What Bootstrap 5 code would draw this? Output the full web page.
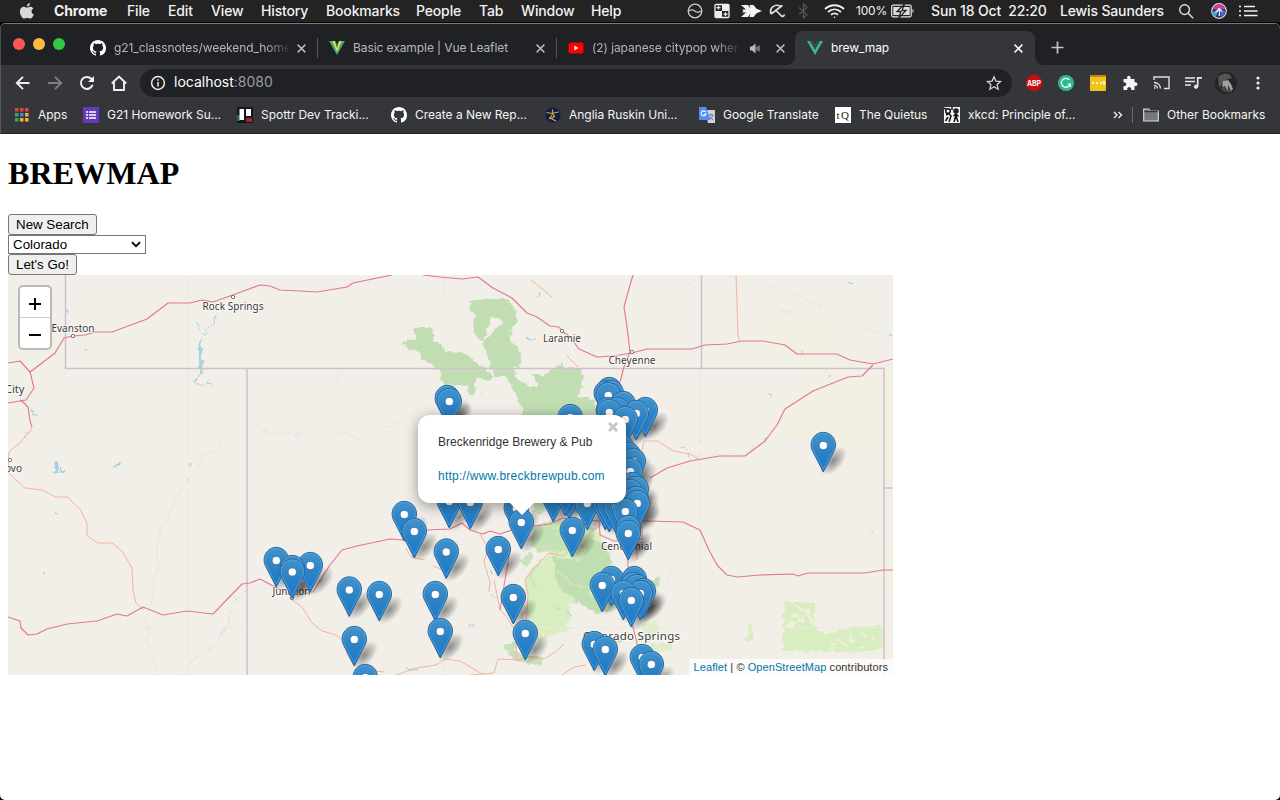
<!DOCTYPE html>
<html lang="en">
<head>
<meta charset="utf-8">
<title>brew_map</title>
<meta name="viewport" content="width=device-width, initial-scale=1">
<link href="https://cdn.jsdelivr.net/npm/bootstrap@5.3.0/dist/css/bootstrap.min.css" rel="stylesheet">
<style>
  html, body { height: 100%; }
  body { background: #06070a; overflow: hidden; font-family: Inter, "Liberation Sans", sans-serif; }
  svg { display: block; flex: none; overflow: visible; }
  .os-bar { height: 23px; background: #232324; color: #f2f2f2; font-size: 14px; font-weight: 500; letter-spacing: -.15px;
    display: grid; align-items: center; white-space: nowrap; line-height: 22px; border-bottom: 1px solid #060607;
    grid-template-columns: 35px 73px 41px 43px 50px 65px 90px 63px 42px 70px 96px 27px 26px 29px 29px 26px 32px 35px 40px 129px 118px 33px 28px 1fr; padding-left: 19px; }
  .os-bar .pct { font-size: 12px; font-weight: 400; letter-spacing: -.2px; }
  .win { height: 777px; background: #fff; border-radius: 6px 6px 5px 5px; overflow: hidden; }
  .tab-strip { height: 42px; background: #202124; border-top: 1px solid #77787a; border-left: 1px solid #4b4c4f; padding-left: 12px; }
  .lights { gap: 8px; width: 66px; margin-top: 20px; height: 0; align-items: center; }
  .lights i { width: 12px; height: 12px; border-radius: 50%; }
  .btab { width: 239px; height: 34px; margin-top: 7px; padding: 0 10px 0 11px; color: #b4b7bb; font-size: 12px; position: relative; letter-spacing: -.08px; }
  .btab .ttl { flex: 1; overflow: hidden; white-space: nowrap; margin-left: 8px; }
  .btab.sep { border-right: 1px solid #55575b; height: 20px; margin-top: 14px; }
  .btab.on { background: #35363a; color: #fff; border-radius: 8px 8px 0 0; width: 240px; padding-right: 11px; margin-left: -1px; padding-left: 12px; }
  .btab.on::before, .btab.on::after { content: ""; position: absolute; bottom: 0; width: 8px; height: 8px; }
  .btab.on::before { left: -8px; background: radial-gradient(circle at 0 0, transparent 7.6px, #35363a 8px); }
  .btab.on::after { right: -8px; background: radial-gradient(circle at 100% 0, transparent 7.6px, #35363a 8px); }
  .fade-end { -webkit-mask-image: linear-gradient(90deg, #000 calc(100% - 22px), rgba(0,0,0,.15)); mask-image: linear-gradient(90deg, #000 calc(100% - 22px), rgba(0,0,0,.15)); }
  .tool-row { height: 36px; background: #35363a; padding-left: 14px; border-left: 1px solid #55565a; }
  .omni { width: 872px; height: 28px; border-radius: 14px; background: #202124; color: #fff; font-size: 14px; line-height: 26px; padding: 0 10px; margin-left: 13px; letter-spacing: 0; }
  .omni .port { color: #9a9da1; }
  .omni .addr { margin-top: -2px; }
  .marks-row { height: 33px; background: #35363a; border-bottom: 1px solid #242528; border-left: 1px solid #55565a; color: #f4f4f4; font-size: 12px; letter-spacing: -.03px; padding-left: 13px; white-space: nowrap; display: grid; align-items: center; padding-bottom: 5px;
    grid-template-columns: 69px 154px 154px 154px 154px 136px 109px 169px 19px 11px 1fr; }
  .bm { display: flex; align-items: center; gap: 8px; }
  .site { padding: 0 8px; color: #000; }
  .site h1 { font: bold 32px/37px "Liberation Serif", serif; margin: 21px 0 22px; letter-spacing: .1px; }
  .plain-btn { display: block; height: 21px; border: 1px solid #767676; border-radius: 3px; background: #efefef; padding: 0 7px; font: 13.33px/18px "Liberation Sans", sans-serif; color: #000; }
  .plain-sel { width: 138px; height: 19px; border: 1px solid #767676; background: #fff; padding: 0 4px; font: 13.33px/17px "Liberation Sans", sans-serif; margin: 0; }
  .map-box { width: 885px; height: 400px; background: #f2efe9; position: relative; overflow: hidden; font-family: "Liberation Sans", sans-serif; }
  .map-box text { font-family: "Noto Sans", sans-serif; fill: #3b3b3b; stroke: #fff; stroke-opacity: .6; stroke-width: 2px; paint-order: stroke; }
  .zoomer { position: absolute; left: 10px; top: 10px; width: 34px; height: 65px; border: 2px solid #bcbab6; border-radius: 5px; background: #fff; }
  .zoomer div { height: 31px; display: grid; place-items: center; padding-top: 3px; }
  .zoomer div:first-child { border-bottom: 1px solid #ccc; }
  .pop { position: absolute; left: 410px; top: 140px; width: 208px; height: 88px; border-radius: 12px; background: #fff; box-shadow: 0 3px 14px rgba(0,0,0,.4); padding: 19px 20px; font-size: 12px; line-height: 16px; color: #333; white-space: nowrap; }
  .pop p { margin: 0 0 18px; letter-spacing: .01px; }
  .pop a { letter-spacing: .25px; }
  .pop a, .credit a { color: #0078a8; text-decoration: none; }
  .pop-x { position: absolute; right: 8px; top: 7px; }
  .pop-tip { position: absolute; left: 91px; top: 87px; }
  .credit { position: absolute; right: 0; bottom: 0; background: rgba(255,255,255,.75); font-size: 11px; line-height: 16px; padding: 0 5px; color: #333; white-space: nowrap; letter-spacing: .08px; }
</style>
</head>
<body>
<svg width="0" height="0" class="position-absolute">
  <defs>
    <symbol id="gh" viewBox="0 0 16 16"><path fill="#fff" d="M8 0C3.58 0 0 3.58 0 8c0 3.54 2.29 6.53 5.47 7.59.4.07.55-.17.55-.38 0-.19-.01-.82-.01-1.49-2.01.37-2.53-.49-2.69-.94-.09-.23-.48-.94-.82-1.13-.28-.15-.68-.52-.01-.53.63-.01 1.08.58 1.23.82.72 1.21 1.87.87 2.33.66.07-.52.28-.87.51-1.07-1.78-.2-3.64-.89-3.64-3.95 0-.87.31-1.59.82-2.15-.08-.2-.36-1.02.08-2.12 0 0 .67-.21 2.2.82.64-.18 1.32-.27 2-.27s1.36.09 2 .27c1.53-1.04 2.2-.82 2.2-.82.44 1.1.16 1.92.08 2.12.51.56.82 1.27.82 2.15 0 3.07-1.87 3.75-3.65 3.95.29.25.54.73.54 1.48 0 1.07-.01 1.93-.01 2.2 0 .21.15.46.55.38A8.01 8.01 0 0 0 16 8c0-4.42-3.58-8-8-8z"/></symbol>
    <symbol id="cross" viewBox="0 0 10 10"><path d="M1.500 1.500l7 7M8.500 1.500L1.500 8.500" stroke="currentColor" stroke-width="1.400"/></symbol>
    <linearGradient id="pinFill" x2="0" y2="1"><stop stop-color="#3f94cf"/><stop offset=".45" stop-color="#2f83c4"/><stop offset="1" stop-color="#1677cb"/></linearGradient>
    <radialGradient id="shade"><stop stop-color="#000" stop-opacity=".42"/><stop offset=".45" stop-color="#000" stop-opacity=".24"/><stop offset="1" stop-color="#000" stop-opacity="0"/></radialGradient>
    <filter id="ragged" x="-5%" y="-5%" width="110%" height="110%"><feTurbulence type="fractalNoise" baseFrequency=".16" numOctaves="2" seed="4"/><feDisplacementMap in="SourceGraphic" scale="7" xChannelSelector="R" yChannelSelector="G"/></filter>
    <g id="pin"><path d="M0 0L-11-21.5C-13.2-26-12.3-32-9-35.6-4-41 4-41 9-35.6 12.3-32 13.2-26 11-21.5z" fill="url(#pinFill)" stroke="#2869a0" stroke-width="1"/><path d="M0-3L-10.2-22C-12-26-11.2-31.5-8.3-34.8-3.8-39.7 3.8-39.7 8.3-34.8 11.2-31.5 12-26 10.2-22z" fill="none" stroke="#70b4e0" stroke-opacity=".5" stroke-width="1"/><circle cy="-26.5" r="4.1" fill="#fff" stroke="#2e6ca3" stroke-width=".7"/></g>
    <g id="pinShade"><ellipse cx="10" cy="-11" rx="17.500" ry="9.500" transform="rotate(-48 10 -11)" fill="url(#shade)"/></g>
  </defs>
</svg>

<!-- macOS menu bar -->
<div class="os-bar">
  <svg width="16" height="18" viewBox="0 0 16 18"><path fill="#d9d9d9" d="M11 1c.1 2-1.500 3.700-3.200 3.600C7.600 2.900 9.300 1.200 11 1zM8 5.700c.7 0 1.700-.9 3.300-.9 1.200 0 2.400.7 3 1.700-2.600 1.500-2.100 5.100.5 6.100-.7 1.900-2.100 4-3.500 4-1.200 0-1.600-.7-3-.7s-1.900.7-3 .7c-2 0-4.400-4-4.400-7.100 0-3 1.900-4.700 3.900-4.700 1.400 0 2.400.9 3.200.9z"/></svg>
  <span class="fw-bold">Chrome</span><span>File</span><span>Edit</span><span>View</span><span>History</span><span>Bookmarks</span><span>People</span><span>Tab</span><span>Window</span><span>Help</span>
  <svg width="16" height="16" viewBox="0 0 16 16" fill="none" stroke="#ccc" stroke-width="1.300"><circle cx="8" cy="8" r="6.800"/><path d="M2 8c3-2.500 4.500-1 6 .2s3.500 1.500 6-.2"/></svg>
  <svg width="16" height="16" viewBox="0 0 16 16"><rect x="1" y="1.500" width="14" height="13" rx="1" fill="#232324" stroke="#eee" stroke-width="1.300"/><path d="M8 1.500h7V8H8zM1 8h7v6.500H1z" fill="#eee"/><path d="M2.500 4.700h4M4.500 2.800v3.800M9.500 11.200h4M11.500 9.300v3.800" stroke="#eee" stroke-width="1.200"/></svg>
  <svg width="22" height="16" viewBox="0 0 22 16"><path fill="#f4f4f4" d="M1 2h7l2.500 3.500L9.500 2h4l3 3.800L22 8l-5.500 2.200-3 3.800h-4l1-3.500L8 14H1l5-4.500H2l1.500-1.500L2 6.500h4z"/></svg>
  <svg width="17" height="16" viewBox="0 0 17 16" fill="none" stroke="#ddd" stroke-width="1.700"><path d="M2 11C0 5 6 0 12 3.500L2 11M7 7.500l5 5c1 1.500 3 1 3.500-1M12 3.500l1.500-1.200"/></svg>
  <svg width="11" height="16" viewBox="0 0 11 16" fill="none" stroke="#545558" stroke-width="1.200"><path d="M1 4.500l8 7L5.500 15V1L9 4.500l-8 7"/></svg>
  <svg width="21" height="16" viewBox="0 0 21 16" fill="none" stroke="#f0f0f0" stroke-width="1.800"><path d="M1 6c5.500-5 13.500-5 19 0M4 9c4-3.500 9-3.500 13 0M7 11.800c2.300-1.900 4.700-1.900 7 0"/><circle cx="10.500" cy="14.300" r=".8" fill="#f0f0f0" stroke="none"/></svg>
  <span class="pct">100%</span>
  <svg width="24" height="14" viewBox="0 0 24 14"><rect x=".7" y="1.200" width="19.500" height="11.600" rx="1.500" fill="none" stroke="#e8e8e8" stroke-width="1.200"/><path d="M2.300 3h16.400v8H2.300z" fill="#ddd"/><path d="M21.500 5v4c1.600-.5 1.600-3.500 0-4z" fill="#ddd"/><path d="M13.500 0L6 7.500h4L7.500 14 15 6.500h-4z" fill="#e8e8e8" stroke="#232324" stroke-width="1.300"/></svg>
  <span>Sun 18 Oct&nbsp; 22:20</span><span>Lewis Saunders</span>
  <svg width="16" height="16" viewBox="0 0 16 16" fill="none" stroke="#ddd" stroke-width="1.400"><circle cx="6.600" cy="6.600" r="4.900"/><path d="M10.200 10.200l5 5"/></svg>
  <svg width="16" height="16" viewBox="0 0 16 16"><circle cx="8" cy="8" r="7.300" fill="#39306f" stroke="#ddd" stroke-width="1.200"/><path d="M2 6C4 0 12 0 14 6L8 7z" fill="#d43b92"/><path d="M2 9l6-3-3 7C3 13 2 11 2 9z" fill="#31b6d9"/><path d="M9 6l5 3c0 3-3 5-4 5z" fill="#3a6fd8"/><path d="M8 4.500L12.500 9l-3.500-1v5H7.500l.5-5-4 2z" fill="#dcefff"/></svg>
  <svg width="19" height="14" viewBox="0 0 19 14" fill="none" stroke="#f2f2f2" stroke-width="1.700"><path d="M0 2.500h2M0 7h2M0 11.500h2M5 2.500h11M5 7h13.500M5 11.500h13.500"/></svg>
</div>

<div class="win d-flex flex-column">
  <div class="tab-strip d-flex">
    <div class="lights d-flex"><i style="background:#fc5753"></i><i style="background:#fdbc40"></i><i style="background:#33c748"></i></div>
    <div class="btab sep d-flex align-items-center"><svg width="16" height="16"><use href="#gh"/></svg><span class="ttl fade-end me-2">g21_classnotes/weekend_home</span><svg width="11" height="11"><use href="#cross"/></svg></div>
    <div class="btab sep d-flex align-items-center"><svg width="16" height="16" viewBox="0 0 16 16"><path fill="#42a86f" d="M0 1h3l5 9 5-9h3L8 15z"/><path fill="#c8df58" d="M3 1h3l2 4 2-4h3L8 12z"/><path fill="#24613f" d="M6 1l2 4 2-4L8 8z"/></svg><span class="ttl">Basic example | Vue Leaflet</span><svg width="11" height="11"><use href="#cross"/></svg></div>
    <div class="btab sep border-0 d-flex align-items-center"><svg width="16" height="16" viewBox="0 0 16 16"><rect x=".5" y="2.500" width="15" height="11" rx="2.500" fill="#f00"/><path fill="#fff" d="M6.300 5.500v5l4.200-2.500z"/></svg><span class="ttl fade-end">(2) japanese citypop when</span><svg class="me-3" style="margin-left:11px" width="12" height="11" viewBox="0 0 12 11"><path fill="#bbb" d="M1 3.500h2L6.500.5v10L3 7.500H1z"/><path d="M8 3.500v4M10 2.500v6" stroke="#bbb"/></svg><svg width="11" height="11" style="margin-left:-2px"><use href="#cross"/></svg></div>
    <div class="btab on d-flex align-items-center"><svg width="16" height="16" viewBox="0 0 16 16"><path fill="#41b883" d="M0 1h3l5 8.500L13 1h3L8 15z"/><path fill="#35495e" d="M3 1h3l2 3.500L10 1h3L8 9.500z"/></svg><span class="ttl">brew_map</span><svg width="11" height="11"><use href="#cross"/></svg></div>
    <svg style="margin:17px 0 0 16px" width="13" height="13" viewBox="0 0 13 13"><path d="M6.500.5v12M.5 6.500h12" stroke="#c4c6c9" stroke-width="1.700"/></svg>
  </div>

  <div class="tool-row d-flex align-items-center">
    <svg width="16" height="16" viewBox="0 0 16 16" fill="none" stroke="#f0f0f0" stroke-width="1.900"><path d="M14.500 8H2M8 1.800L1.800 8 8 14.200"/></svg>
    <svg style="margin-left:16px" width="16" height="16" viewBox="0 0 16 16" fill="none" stroke="#7d7f83" stroke-width="1.900"><path d="M1 8h13M8 1.800L14.200 8 8 14.200"/></svg>
    <svg style="margin-left:16px" width="16" height="16" viewBox="0 0 16 16"><path d="M13.600 9.800A6 6 0 1 1 12.300 3.800L14 5.500" fill="none" stroke="#f0f0f0" stroke-width="2"/><path d="M15 1v6H9z" fill="#f0f0f0"/></svg>
    <svg style="margin-left:16px" width="16" height="16" viewBox="0 0 16 16" fill="none" stroke="#f0f0f0" stroke-width="1.900"><path d="M.8 8.500L8 1.500l7.200 7M3 7v8h10V7"/></svg>
    <div class="omni d-flex align-items-center"><svg class="me-2" width="16" height="16" viewBox="0 0 16 16" fill="none" stroke="#eee" stroke-width="1.500"><circle cx="8" cy="8" r="6.400"/><path d="M8 7v4.500M8 4.200v1.600"/></svg><span class="addr me-auto">localhost<span class="port">:8080</span></span>
      <svg width="16" height="16" viewBox="0 0 16 16" fill="none" stroke="#d0d1d3" stroke-width="1.300"><path d="M8 1.800l1.900 4.300 4.700.4-3.500 3.100 1 4.600L8 11.800l-4.100 2.400 1-4.600L1.400 6.500l4.700-.4z"/></svg></div>
    <svg style="margin-left:14px" width="16" height="16" viewBox="0 0 16 16"><path fill="#c70d0d" d="M5 0h6l5 5v6l-5 5H5l-5-5V5z"/><text x="8" y="10.500" font-size="7" font-weight="700" fill="#fff" text-anchor="middle" textLength="14" lengthAdjust="spacingAndGlyphs">ABP</text></svg>
    <svg style="margin-left:16px" width="16" height="16" viewBox="0 0 16 16"><circle cx="8" cy="8" r="8" fill="#2bb98d"/><path d="M11.500 5A4.500 4.500 0 1 0 12.300 9H9.500M12.300 9v3" fill="none" stroke="#fff" stroke-width="1.200"/></svg>
    <svg style="margin-left:16px" width="16" height="16" viewBox="0 0 16 16"><rect width="16" height="16" rx="1" fill="#f0c419"/><path d="M0 0h16v2H0z" fill="#b58c16"/><path d="M2 8h2M6 8h2M10 8h2M14 6v4" stroke="#fff" stroke-width="1.500"/></svg>
    <svg style="margin-left:16px" width="16" height="16" viewBox="0 0 16 16"><path fill="#f4f4f4" d="M1.500 4h3.700C4-.5 9.500-.5 8.600 4h3.900v3.300c4-.9 4 4.500 0 3.600V15H9.300c.2-4-4.400-4-4.200 0H1.500v-3.800c3.800.2 3.800-4.200 0-4z"/></svg>
    <svg style="margin-left:15px" width="17" height="16" viewBox="0 0 17 16" fill="none" stroke="#dfe0e2" stroke-width="1.400"><path d="M1 5V2h15v11.500h-5M1 7.500c4 0 6.500 3 6.500 6M1 10.500c2 0 3.500 1.500 3.500 3M1 13h1.500"/></svg>
    <svg style="margin-left:15px" width="17" height="16" viewBox="0 0 17 16" fill="none" stroke="#e6e7e8" stroke-width="1.700"><path d="M0 3h10M0 6.500h10M0 10h6M12.700 11.500V2.800H17"/><circle cx="11" cy="11.700" r="1.700" fill="#e6e7e8" stroke-width="1"/></svg>
    <svg style="margin-left:13px" width="22" height="22" viewBox="0 0 22 22"><circle cx="11" cy="11" r="11" fill="#242424"/><path d="M3 5Q8 0 14 2l3 4-7 2-6 8z" fill="#555"/><path d="M5 17l5-4 7 7q-6 2-12-3z" fill="#444"/><path d="M8 9l5-1 3 4 2 5-2 2-3-6v6l-3-5-3 1z" fill="#a0a0a0"/></svg>
    <svg style="margin-left:19px" width="4" height="16" viewBox="0 0 4 16" fill="#eee"><circle cx="2" cy="3" r="1.600"/><circle cx="2" cy="8" r="1.600"/><circle cx="2" cy="13" r="1.600"/></svg>
  </div>

  <div class="marks-row">
    <div class="bm" style="gap:9px"><svg width="15" height="14" viewBox="0 0 15 14"><path fill="#dc4a3d" d="M1 0h3.500v3.500H1zM6 0h3.500v3.500H6zM11 0h3.500v3.500H11z"/><path fill="#3ba55c" d="M1 5h3.500v3.500H1zM1 10h3.500v3.500H1z"/><path fill="#3f86ea" d="M6 5h3.500v3.500H6z"/><path fill="#e9b630" d="M11 5h3.500v3.500H11zM6 10h3.500v3.500H6zM11 10h3.500v3.500H11z"/></svg>Apps</div>
    <div class="bm"><svg width="16" height="16" viewBox="0 0 16 16"><path fill="#673ab7" d="M0 0h16v16H0z"/><path d="M3 5h2M3 8h2M3 11h2M6 5h7M6 8h7M6 11h7" stroke="#fff" stroke-width="1.700"/></svg>G21 Homework Su...</div>
    <div class="bm"><svg width="16" height="16" viewBox="0 0 16 16"><path fill="#13171b" d="M0 0h16v16H0z"/><path fill="#28636b" d="M0 8h3v6H0z"/><path fill="#9d2931" d="M9 11h6v4H9z"/><rect x="2.500" y="2" width="4.500" height="11" fill="#fff"/><rect x="9" y="2" width="5" height="7" fill="#fff"/></svg>Spottr Dev Tracki...</div>
    <div class="bm"><svg width="16" height="16"><use href="#gh"/></svg>Create a New Rep...</div>
    <div class="bm"><svg width="16" height="16" viewBox="0 0 16 16"><circle cx="8" cy="8" r="7.600" fill="#111d46"/><path d="M1.500 5.500l5.500 1 6.500-1.500M7.500 2.500v4l2 3-3.500 2 5 2.500M7 8l-3 4" fill="none" stroke="#d3ae3d" stroke-width="1.200"/></svg>Anglia Ruskin Uni...</div>
    <div class="bm"><svg width="16" height="16" viewBox="0 0 16 16"><path fill="#cfd3d8" d="M6 3h9a1 1 0 0 1 1 1v12H9z"/><path d="M9.500 8h5M12 6.500V8M14 8c-.5 2-2 3.500-3.500 4M11 9.500l3 3.500" stroke="#687e91" fill="none"/><path fill="#4f8df5" d="M0 0h7l4.500 13H1a1 1 0 0 1-1-1z"/><path d="M6.700 5A2.500 2.500 0 1 0 7 7H4.800" fill="none" stroke="#fff" stroke-width="1.100"/></svg>Google Translate</div>
    <div class="bm"><svg width="16" height="16" viewBox="0 0 16 16"><path fill="#fff" d="M0 0h16v16H0z"/><text x="1.500" y="11.500" font-family="Liberation Serif" font-size="11" fill="#222" textLength="12.500">tQ</text></svg>The Quietus</div>
    <div class="bm"><svg width="16" height="16" viewBox="0 0 16 16"><path fill="#f4f4f4" d="M0 0h16v16H0z"/><path d="M2 8l2.500-1.500L7 9l-2 6M9.500 9L12 7l2.500 2.500M1.500 14L4 10M12 8l-2 7M12 9l2 6M8 0v3M0 1.500h2" stroke="#111" stroke-width="1.500" fill="none"/><circle cx="4" cy="4" r="2.300" fill="#fff" stroke="#111" stroke-width="1.600"/><circle cx="12" cy="4" r="2.800" fill="#222"/></svg>xkcd: Principle of...</div>
    <svg width="10" height="10" viewBox="0 0 10 10" fill="none" stroke="#eee" stroke-width="1.400"><path d="M1 2l3 3-3 3M5.500 2l3 3-3 3"/></svg>
    <svg width="1" height="16"><path d="M.5 0v16" stroke="#6b6c70"/></svg>
    <div class="bm"><svg width="16" height="14" viewBox="0 0 16 14"><path d="M.7 1h5l1.500 2h8.100v10H.7z" fill="#77787b" stroke="#d6d7d8" stroke-width="1.200"/><path d="M1.300 3.600h13.500" stroke="#35363a" stroke-width="1.500"/></svg>Other Bookmarks</div>
  </div>

  <main class="site flex-grow-1">
    <h1>BREWMAP</h1>
    <button class="plain-btn">New Search</button>
    <div class="plain-sel d-flex align-items-center justify-content-between">Colorado<svg width="10" height="7" viewBox="0 0 10 7"><path d="M1 1.200l4 4 4-4" fill="none" stroke="#000" stroke-width="1.900"/></svg></div>
    <button class="plain-btn">Let's Go!</button>

    <div class="map-box">
      <svg width="885" height="400" viewBox="8 275 885 400">
        <!-- farmland tint -->
        <g fill="#f2f1e0" filter="url(#ragged)"><path d="M762 318l40-4 28 8v28l-60-3zM800 392l50-16 30-6v70l-28 14-60-16-30 10zM780 350l50 8 30 12-50 14zM870 545h23v45h-15z" opacity=".7"/><path d="M885 370h8v118h-8z"/></g>
        <!-- forests -->
        <g filter="url(#ragged)">
          <g fill="#d8edc0">
            <path d="M525 577L550 553 538 552 531 543 545 528 550 523 600 533 613 560V610L600 613 590 603H568L572 617 560 632 543 633 540 647 533 633 530 623 524 610 528 595z"/>
            <path d="M546 632l20-6 10 2-14 4-18 6zM640 625l12-6 8 6-2 10-12 4zM648 645l22-3 2 8-20 4z" opacity=".8"/>
            <path d="M783 602h32l1 28 9 4 16-4 20-4h21l1 22-14 4-34-1-52 0zM748 624h6v16l-9 2z"/>
          </g>
          <g fill="#c0deb2">
            <path d="M403 345L408 340 415 339 413 330 420 327 432 330 434 340 443 345 445 352 465 353 473 360 483 368 493 377 487 381 477 377 475 385 474 394 469 394 468 386 458 385 443 386 441 372 432 365 425 362 418 352 407 348z"/>
            <path d="M468 303L478 300 495 298 505 299 517 310 515 327 510 333 512 343 521 353 520 367 512 368 517 378 528 387 538 387 532 375 537 373 542 377 562 362 565 368 583 368 582 387 578 397 595 400 598 420H523L520 403 510 383 505 377 495 377 490 367 487 353 482 343 503 322 497 317 490 318 484 339 480 340 473 330 474 315z"/>
            <path d="M553 557L580 562 590 540 603 543 613 563 592 577 590 593 610 610 597 614 580 602 563 592 555 577z"/>
            <path d="M533 527L545 522 560 520 583 520 597 533 577 553 550 550 537 553 532 543zM536 500l14 4-10 12-8-6zM520 560l10-8 4 6-10 10z" opacity=".8"/>
            <path d="M503 646l12-5 8 3-8 6 12 6h14v10l-14-3-14-4-6-6zM650 582l8-6 2 8-8 4zM616 640l6-4-2 8z" opacity=".85"/>
          </g>
          <path d="M793 614l8 6 7-10 2 10 8 8M786 625l10-1M795 606l8 4M830 642l5 3M840 640l6 5M850 636l5 6M862 634l3 5M872 640l3-3M858 648l5-2M829 650l4-2" fill="none" stroke="#f2efe0" stroke-width="2.500"/>
          <path d="M552 526l12 6 14-2M560 541l18 4M556 570l14 12 14 6M540 560l-8 14 4 16" stroke="#cde6b8" stroke-width="2.500" fill="none"/>
        </g>
        <!-- water -->
        <g fill="none" stroke="#a7d2de" stroke-width="1.200" filter="url(#ragged)">
          <path d="M217 314l-4 6 1 5-8 4 0 6-5 0M197 322l4 8M201 338l-2 5 2 7-1 5 3 8-3 6 0 8-6 3 5 5 8-3 6 1"/><path d="M200 340l1 34" stroke-width="3"/>
          <path d="M57 461v12M63 469v3" stroke-width="4.500"/><path d="M114 468l6-5M55 512l2 4M43 570l1 4M67 308l1 6" stroke-width="2"/>
          <path d="M30 410l8 5M24 437l3-5M187 480h4M188 465h3M84 350h4M538 297l2-5M527 340l7-2M889 334l5 1M847 282l6 2M768 393l4 4M680 448l5-2M691 454l-3 3M699 441l2 1M827 378l4-2M763 440l4-3M481 390l1 5M488 570l6 4M490 595l6 2M566 610l6 7M557 607l2 4M468 626l6-2M406 667l12 4M690 283v2M870 533h3"/>
        </g>
        <g fill="none" stroke="#dfe5e5" stroke-width="1" filter="url(#ragged)">
          <path d="M222 437l-3 12-10 4-8 4-3 12-9 11-7 6-3 8-5 5-4 14-8 13-4 14-1 8 2 12-4 18-3 22-4 14-1 12 2 8-3 6 6 16 3 12 5 14v14M247 590l-15 14-4 20-10 18-16 12-10 8-10 14"/>
          <path d="M340 375l-12 22-5 18-12 14-10 6-38-4M335 429l20 9 14-2 10-6 20-8M765 283l60 25 40 20 28 10M760 438l-14 16-45 2-18-8M671 570l-4 14-7 9M260 431l30 3 12 3M280 633l-8 4M761 313l12-6 10 4 12 3" stroke="#e4e8e5"/>
        </g>
        <path d="M188.500 275v400M444.500 275v25M444.500 395v280M700.500 369v306M8 371.500h57M8 627.500h885" stroke="#ece9e5"/>
        <!-- state lines -->
        <path d="M65.500 275v93.500H884V675M247 369v306M701.500 275v93.500M884 488h9" fill="none" stroke="#d1bfd0" stroke-width="1.500"/>
        <!-- secondary roads -->
        <g fill="none" stroke="#f7b1a2" stroke-width="1" stroke-linejoin="round">
          <path d="M32 427l-2 5-7 7-3 4-8 6-3 3-1 20 8 8 9 8 17 2 8 4 5 3 13 0 4 5 8 7 7 14v12l6 5 5 3h14l10 8 10 17 1 22 3 13 8 7"/>
          <path d="M531 280l9 7 12 10M736 275l1 28 1 33 2 6M802 350v5M567 356l11 11M642 450l2-9h14l15 10 17 3 10 6M292 600l10 7 10 16 10 8 14 4 8 6 3 13 6 10M365 670l20 2M396 675l20-7 20-3 9-6 15 2 12 7 12 7M406 548l5 9 14 3M433 566l10 4M480 534l8 14-4 14 6 20-1 10M494 580l6 30 6 6 9 15 2 30 10-5 17 3 10-6 10-9M470 675l24-2 4-14 24 1M525 640l3-45-3-15 10-13 14-14 14 3 24-20 14-12M637 560v-20M562 675l12-8 12-2"/>
        </g>
        <!-- motorways -->
        <g fill="none" stroke="#e2788f" stroke-width="1.150" stroke-linejoin="round">
          <path d="M8 363l12-2 10 11 12-9 13-10 9-15 9-2 12-1 10-3h17l35-13 21-16h22l12-3 11 2 17-6 30-11 10 1 10 4 20 1 17 1 30-5 6-4 39-8M423 275l17 2 22 2 16-2 15 11 19 10 15 15 10 4 13 9 9 1 3 4 8 6 9 12 18 8 16-1 19-3 15-4h45l13-4 22-1 15-3h21l22 4 12 9h40l13 6 23 4 20-5"/>
          <path d="M873 365l-11 11-14 1-35 14-28 18-8 16-12 16-20 15-25 0-30 5-23 7-17 10M633 275l-3 10-6 22 3 20 3 25-6 15-4 15"/>
          <path d="M30 372l4 16-8 12-18 3M20 400l4 3 4 4 2 14 2 6"/>
          <path d="M8 617l12 4 1 7 7 7 9-1 10-5 20-5 30-3 20-7 10 2 16-9 20 8 24-4 26 3 29-30 8-1 10-4 15 8 17 9 21-4 17-27 12-15 15-4 33-7 15 1 22-10 23-1 12-6 8 7 13 4 7-3 10 3 12-4 21-4 17-2 13-6 7 1 27 2h50l36 1 17 8 9 20 8 15 10 10 11 2 22-2 33-1 5 2 10-3h57l18-3h10"/>
          <path d="M628 525v40l2 50 8 32 8 28M599 520l1 15 14 6 28-2v-12l-14-10M500 610l10-60" opacity=".85"/>
        </g>
        <!-- place names -->
        <g fill="#fff" stroke="#777" stroke-width="1"><circle cx="73" cy="336" r="1.700"/><circle cx="233" cy="297" r="1.700"/><circle cx="562" cy="331" r="1.700"/><circle cx="632" cy="352" r="1.700"/><circle cx="10" cy="460" r="1.700"/><circle cx="292" cy="598" r="1.700"/></g>
        <g font-size="10">
          <text x="51.500" y="332" textLength="43">Evanston</text><text x="202.500" y="309.500" textLength="61">Rock Springs</text>
          <text x="543" y="342" textLength="38">Laramie</text><text x="608.500" y="363.500" textLength="47">Cheyenne</text>
          <text x="5" y="392.500" font-size="11">City</text><text x="5" y="471.500">ovo</text>
          <text x="272.500" y="594.500" textLength="38">Junction</text>
          <text x="601" y="550" textLength="51">Centennial</text><text x="583" y="640" font-size="11.500" textLength="97">Colorado Springs</text>
        </g>
        <g id="shades"></g><g id="pins"></g>
      </svg>
      <div class="zoomer"><div><svg width="14" height="14" viewBox="0 0 14 14"><path d="M7 1v12M1 7h12" stroke="#000" stroke-width="2"/></svg></div><div><svg width="14" height="14" viewBox="0 0 14 14"><path d="M1 7h12" stroke="#000" stroke-width="2"/></svg></div></div>
      <div class="pop">
        <svg class="pop-tip" width="26" height="14" viewBox="0 0 26 14"><path fill="#fff" d="M0 0h26L13 13z"/></svg>
        <svg class="pop-x" width="10" height="10" viewBox="0 0 10 10"><path d="M1 1l8 8M9 1L1 9" stroke="#c3c3c3" stroke-width="2.600"/></svg>
        <p>Breckenridge Brewery &amp; Pub</p><a href="#">http://www.breckbrewpub.com</a>
      </div>
      <div class="credit"><a href="#">Leaflet</a> | © <a href="#">OpenStreetMap</a> contributors</div>
    </div>
  </main>
</div>

<script src="https://cdn.jsdelivr.net/npm/bootstrap@5.3.0/dist/js/bootstrap.bundle.min.js"></script>
<script>
  // Brewery positions: centre of each pin's dot, back to front.
  const spots = [[609,391],[606,394],[611,394],[608,396],[447,399],[449,402],[623,405],[645,411],[608,411],[617,411],[636,414],[570,418],[609,413],[625,420],[823,446],
    [621,448],[628,456],[633,462],[630,472],[632,486],[636,490],[630,493],[553,496],[569,493],[449,502],[470,503],[587,504],[636,500],[605,504],[609,506],[616,508],[637,504],[516,509],[565,490],[404,515],[625,512],[521,523],[628,529],[414,532],[572,531],[628,534],[498,550],[446,552.500],
    [276,561],[310,566],[292,569],[292,572.500],[611,580],[634,580],[602,586],[633,586],[637,588],[349,590.500],[643,592],[640,594],[379,595],[435,595],[623,594],[513,598],[631,601],[440,632],[525,634],[354,640],[594,645],[605,650],[642,658],[651,665],[365,678]];
  const put = (box, ref) => document.getElementById(box).innerHTML = spots.map(([x, y]) => `<use href="#${ref}" x="${x + .3}" y="${y + 26}"/>`).join('');
  put('shades', 'pinShade');
  put('pins', 'pin');
</script>
</body>
</html>
